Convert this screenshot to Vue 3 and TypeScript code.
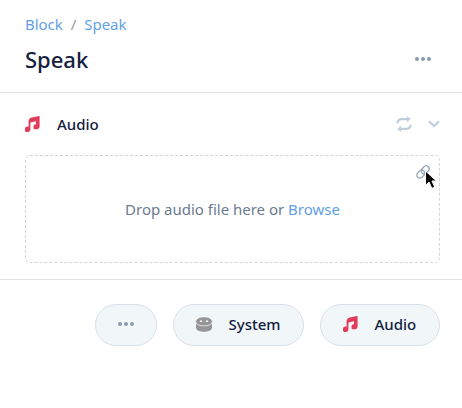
<script setup lang="ts">
import { ref } from 'vue'

const crumbs = ref<string[]>(['Block', 'Speak'])
const notePath =
  'M14 .1 6.8 1.6C4.6 2.2 3.6 3.4 3.6 5.4V10.6H2.4C.9 10.6 0 11.7 0 13.1V14.6C0 15.5 .6 16 1.5 16H2.6C4.4 16 5.4 15 5.4 13.2V7.7C5.4 6.9 5.8 6.5 6.5 6.3L11 5.3V8.2H10.6C9.3 8.2 8.5 9.2 8.5 10.5V11.8C8.5 12.8 9.1 13.3 10 13.3H11.3C13.3 13.3 14.6 12.2 14.6 10.2V.6C14.6 .2 14.4 0 14 .1Z'
</script>

<template>
  <main class="panel">
    <header class="header">
      <nav class="crumbs">
        <template v-for="(crumb, i) in crumbs" :key="crumb">
          <span v-if="i" class="slash">/</span>
          <a>{{ crumb }}</a>
        </template>
      </nav>
      <div class="title-row">
        <h1>Speak</h1>
        <span class="dots"><i /><i /><i /></span>
      </div>
    </header>

    <section class="section">
      <div class="section-head">
        <svg class="note" viewBox="0 0 15 16"><path :d="notePath" /></svg>
        <h2>Audio</h2>
        <svg class="repeat" viewBox="0 0 16 16" fill="none" stroke="currentColor" stroke-width="2.1">
          <path d="M1.4 7.4C1.4 4.6 2.8 3.1 5.6 3.1H12M14.6 8.6C14.6 11.4 13.2 12.9 10.4 12.9H4" />
          <path d="M11 0 14.8 3.1 11 6.2ZM5 9.8 1.2 12.9 5 16Z" fill="currentColor" stroke="none" />
        </svg>
        <svg class="chevron" viewBox="0 0 12 8"><path d="M1 1.2 6 6 11 1.2" /></svg>
      </div>
      <div class="drop">
        <p>Drop audio file here or <a>Browse</a></p>
        <svg class="link" viewBox="0 0 14 14">
          <g transform="rotate(-45 7 7)">
            <rect x="-.5" y="4" width="8.8" height="6" rx="3" />
            <rect x="5.7" y="4" width="8.8" height="6" rx="3" />
          </g>
        </svg>
        <svg class="cursor" viewBox="0 0 14 20">
          <path d="M1.5 1V15.3L5 12 7.8 18.4 10.7 17.1 8 11H12.5Z" />
        </svg>
      </div>
    </section>

    <footer class="actions">
      <button class="pill more"><span class="dots"><i /><i /><i /></span></button>
      <button class="pill system">
        <svg class="disk" viewBox="0 0 16 15">
          <path class="base" d="M0 4.5C0-1.3 16-1.3 16 4.5V10.5C16 16.3 0 16.3 0 10.5Z" />
          <path class="rim" d="M0 5.3C.4 10.1 15.6 10.1 16 5.3" />
          <ellipse class="hole" cx="5" cy="4.2" rx="1.2" ry=".9" />
          <ellipse class="hole" cx="11" cy="4.2" rx="1.2" ry=".9" />
        </svg>
        <span>System</span>
      </button>
      <button class="pill audio">
        <svg class="note" viewBox="0 0 15 16"><path :d="notePath" /></svg>
        <span>Audio</span>
      </button>
    </footer>
  </main>
</template>

<style>
body {
  background: #fff;
}
</style>

<style scoped>
.panel {
  box-sizing: border-box;
  width: 462px;
  height: 408px;
  overflow: hidden;
  color: #14203f;
  font-family: 'Noto Sans', 'Open Sans', sans-serif;
  font-size: 15px;
}
a {
  color: #62a0e4;
}
.header {
  box-sizing: border-box;
  height: 93px;
  padding: 14px 31px 0 25px;
  border-bottom: 1px solid #dfe2e6;
}
.crumbs {
  display: flex;
  gap: 8px;
  height: 20px;
  line-height: 20px;
  letter-spacing: -0.04px;
}
.slash {
  color: #929aa4;
}
.title-row {
  display: flex;
  align-items: center;
  justify-content: space-between;
  height: 30px;
  margin-top: 10px;
}
h1 {
  margin: 0;
  font-size: 22px;
  font-weight: 500;
  line-height: 30px;
}
.dots {
  display: flex;
  gap: 2px;
}
.dots i {
  width: 4px;
  height: 4px;
  border-radius: 50%;
  background: #8b9bae;
}
.section {
  box-sizing: border-box;
  height: 187px;
  padding: 19px 22px 0 25px;
  border-bottom: 1px solid #dfe2e6;
}
.section-head {
  display: flex;
  align-items: center;
  height: 24px;
}
h2 {
  flex: 1;
  margin: 0 0 0 17px;
  font-size: 15px;
  font-weight: 500;
  line-height: 24px;
}
.note {
  width: 15px;
  height: 16px;
  fill: #e23c5a;
}
.repeat {
  width: 16px;
  height: 16px;
  margin-right: 16px;
  color: #bfcddc;
}
.chevron {
  width: 12px;
  height: 8px;
  fill: none;
  stroke: #bfcddc;
  stroke-width: 2.2;
}
.drop {
  position: relative;
  display: flex;
  align-items: center;
  justify-content: center;
  box-sizing: border-box;
  height: 108px;
  margin-top: 19px;
  border: 1px dashed #cfd6df;
  border-radius: 5px;
}
.drop p {
  margin: 0;
  color: #6b7b90;
  line-height: 20px;
  letter-spacing: -0.01px;
}
.link {
  position: absolute;
  top: 9px;
  right: 9px;
  width: 14px;
  height: 14px;
  overflow: visible;
  fill: none;
  stroke: #98a8b9;
  stroke-width: 1.3;
}
.cursor {
  position: absolute;
  top: 14px;
  right: 1px;
  width: 14px;
  height: 20px;
  fill: #050505;
  stroke: #fff;
  stroke-width: 1;
}
.actions {
  display: flex;
  justify-content: flex-end;
  gap: 16px;
  padding: 24px 22px 0;
}
.pill {
  display: flex;
  align-items: center;
  box-sizing: border-box;
  height: 42px;
  padding: 0 22px 2px;
  border: 1px solid #d9e0e8;
  border-radius: 21px;
  background: #f1f7f8;
  color: inherit;
  font: 500 15px/20px 'Noto Sans', 'Open Sans', sans-serif;
}
.more {
  justify-content: center;
  width: 62px;
}
.system {
  width: 131px;
}
.audio {
  width: 120px;
}
.pill > span:not(.dots) {
  margin-left: 16.5px;
}
.disk {
  width: 16px;
  height: 15px;
}
.base {
  fill: #979797;
}
.rim {
  fill: none;
  stroke: #e4e7e8;
  stroke-width: 0.9;
}
.hole {
  fill: #edf0f0;
}
</style>
